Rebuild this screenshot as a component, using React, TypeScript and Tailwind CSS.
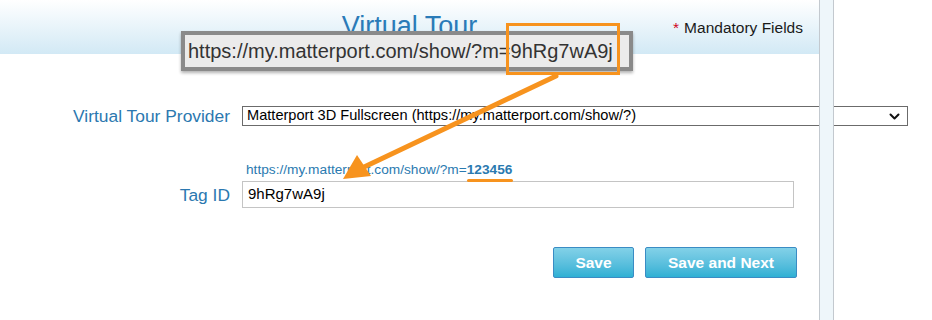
import React from 'react';

const orange = '#f7931e';

function Chevron() {
  return (
    <svg width="11" height="7" viewBox="0 0 11 7" fill="none">
      <path d="M1.5 1.5 L5.5 5.5 L9.5 1.5" stroke="#111" strokeWidth="2" strokeLinecap="round" strokeLinejoin="round" />
    </svg>
  );
}

function FormRow({ label, children }: { label: string; children: React.ReactNode }) {
  return (
    <div className="flex items-center">
      <div className="w-[230px] shrink-0 text-right text-[17.4px] leading-[20px] text-[#2b78b0]">{label}</div>
      <div className="ml-[12px] flex-1">{children}</div>
    </div>
  );
}

export default function App() {
  return (
    <div className="relative flex h-[320px] w-[932px] overflow-hidden bg-white font-['Liberation_Sans',Arial,sans-serif]">
      <div className="w-[819px] shrink-0">
        {/* header band */}
        <div className="grid h-[54px] grid-cols-[1fr_auto_1fr] items-start bg-gradient-to-b from-white to-[#d2e9f5]">
          <div />
          <h1 className="pt-[10px] text-[27px] leading-[32px] text-[#2a7bb8]">Virtual Tour</h1>
          <div className="flex justify-end pr-[16px] pt-[18px] text-[15.5px] leading-[20px] text-[#1a1a1a]">
            <span className="mr-[5px] text-[#d0021b]">*</span>Mandatory Fields
          </div>
        </div>

        <div className="pt-[52px]">
          <FormRow label="Virtual Tour Provider">
            <div className="flex h-[20px] w-[666px] items-center justify-between border border-[#6b6b6b] bg-white pl-[4px] pr-[7px] text-[14.6px] text-black">
              <span>Matterport 3D Fullscreen (https://my.matterport.com/show/?)</span>
              <Chevron />
            </div>
          </FormRow>

          <div className="ml-[246px] mt-[36px] text-[13.7px] leading-[16px] text-[#2a7ab0]">
            https://my.matterport.com/show/?m=<span className="font-bold">123456</span>
          </div>

          <div className="mt-[3px]">
            <FormRow label="Tag ID">
              <div className="flex h-[27px] w-[552px] items-center border border-[#c4c4c4] bg-white pl-[5px] text-[15px] text-black">
                9hRg7wA9j
              </div>
            </FormRow>
          </div>

          <div className="mt-[39px] flex gap-[11px] pl-[553px]">
            <button className="h-[31px] w-[81px] rounded-[2px] border border-[#3a8cc4] bg-gradient-to-b from-[#82d1e8] to-[#2db0d4] text-[15.5px] font-bold text-white">
              Save
            </button>
            <button className="h-[31px] w-[152px] rounded-[2px] border border-[#3a8cc4] bg-gradient-to-b from-[#82d1e8] to-[#2db0d4] text-[15.5px] font-bold text-white">
              Save and Next
            </button>
          </div>
        </div>
      </div>

      {/* right side strip */}
      <div className="h-full w-[15px] shrink-0 border-x border-[#c3c9cf] bg-[#eef6fa]" />
      <div className="flex-1" />

      {/* annotation: zoomed url callout */}
      <div className="absolute left-[181px] top-[31px] flex h-[40px] w-[452px] items-center border-[4px] border-[#8a8a8a] bg-[#ebebeb] pl-[3px] text-[20px] text-[#333] shadow-[0_2px_3px_rgba(0,0,0,0.3)]">
        https://my.matterport.com/show/?m=9hRg7wA9j
      </div>
      <div className="absolute left-[506px] top-[23px] h-[52px] w-[114px] border-[3px] border-[#f7931e]" />
      <div className="absolute left-[467px] top-[179px] h-[3px] w-[46px] rounded-full bg-[#f7931e]" />
      <svg className="pointer-events-none absolute left-0 top-0" width="932" height="320">
        <line x1="556" y1="76" x2="362" y2="168" stroke={orange} strokeWidth="5" strokeLinecap="round" />
        <polygon points="343,179 357,155 371,176" fill={orange} />
      </svg>
    </div>
  );
}
